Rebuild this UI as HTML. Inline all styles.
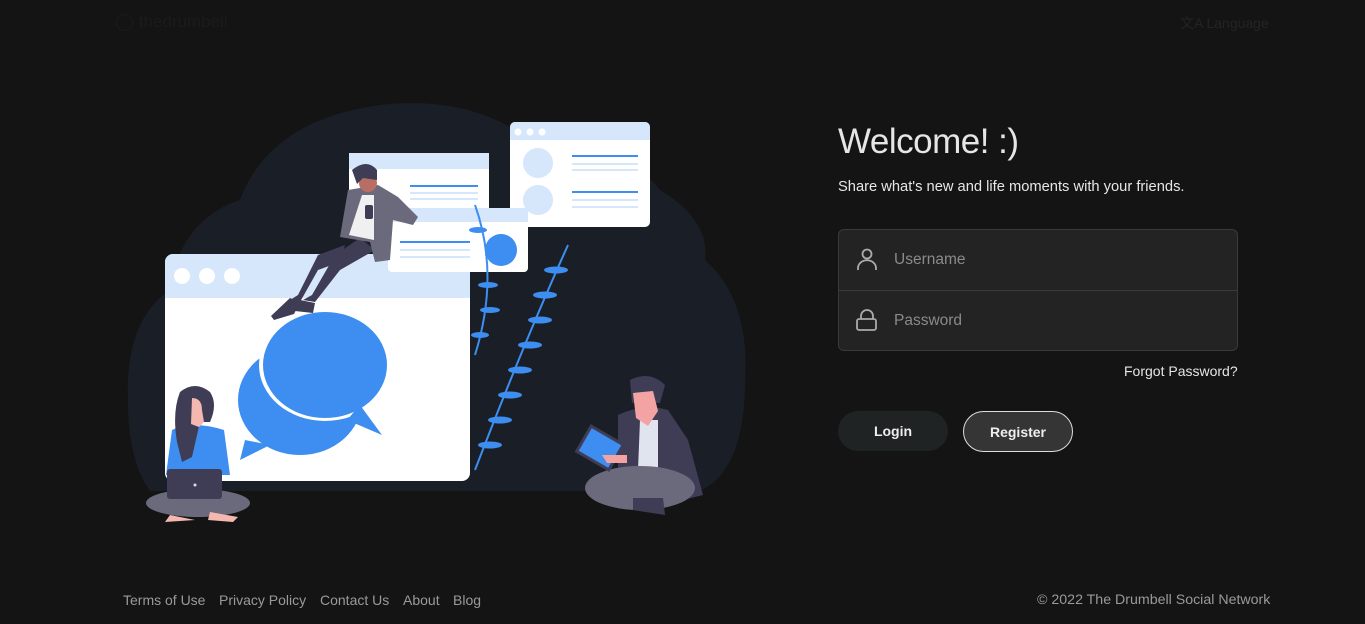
<!DOCTYPE html>
<html><head><style>
body{margin:0;width:1365px;height:624px;background:#141414;font-family:"Liberation Sans",sans-serif;overflow:hidden;position:relative;color:#ddd}
.a{position:absolute}
.box{left:838px;top:229px;width:398px;height:120px;border:1px solid #3a3a3a;border-radius:6px;background:#232323}
.row{height:60px;position:relative}
.row+.row{border-top:1px solid #3a3a3a}
.ph{position:absolute;left:55px;top:21px;font-size:15.5px;color:#8a8a8a}
.btn{height:40px;border-radius:21px;font-size:14px;font-weight:bold;color:#eee;text-align:center;line-height:40px}
.foot{top:592px;font-size:14px;color:#9a9a9a}
</style></head><body>
<div class="a" style="left:115px;top:12px;font-size:17px;color:#1b1b1b">◯ thedrumbell</div>
<div class="a" style="left:1180px;top:13px;font-size:14px;color:#242424">文A Language</div>

<svg class="a" style="left:0;top:0" width="800" height="560">
<path d="M150 491 Q128 460 128 400 Q125 320 170 290 Q180 220 240 200 Q270 120 380 105 Q470 95 530 140 Q620 140 660 190 Q710 220 705 260 Q750 300 745 380 Q745 470 700 491 Z" fill="#1a1f27"/>
<rect x="165" y="254" width="305" height="227" rx="8" fill="#fff"/>
<path d="M173 254h289a8 8 0 0 1 8 8v36H165v-36a8 8 0 0 1 8-8z" fill="#d6e6fb"/>
<circle cx="182" cy="276" r="8" fill="#fff"/><circle cx="207" cy="276" r="8" fill="#fff"/><circle cx="232" cy="276" r="8" fill="#fff"/>
<ellipse cx="300" cy="400" rx="62" ry="55" fill="#3d8ef0"/><path d="M245 440 l-5 20 30 -15z" fill="#3d8ef0"/>
<ellipse cx="325" cy="365" rx="66" ry="56" fill="#fff"/>
<ellipse cx="325" cy="365" rx="62" ry="53" fill="#3d8ef0"/><path d="M360 405 l22 30 -35 -15z" fill="#3d8ef0"/>
<rect x="510" y="122" width="140" height="105" rx="5" fill="#fff"/><path d="M515 122h130a5 5 0 0 1 5 5v13H510v-13a5 5 0 0 1 5-5z" fill="#d6e6fb"/>
<circle cx="518" cy="132" r="3.5" fill="#fff"/><circle cx="530" cy="132" r="3.5" fill="#fff"/><circle cx="542" cy="132" r="3.5" fill="#fff"/>
<circle cx="538" cy="163" r="15" fill="#d6e6fb"/><circle cx="538" cy="200" r="15" fill="#d6e6fb"/>
<g stroke="#3d8ef0" stroke-width="2"><line x1="572" y1="156" x2="638" y2="156"/><line x1="572" y1="192" x2="638" y2="192"/></g>
<g stroke="#d6e6fb" stroke-width="2"><line x1="572" y1="164" x2="638" y2="164"/><line x1="572" y1="170" x2="638" y2="170"/><line x1="572" y1="200" x2="638" y2="200"/><line x1="572" y1="207" x2="638" y2="207"/></g>
<rect x="349" y="153" width="140" height="80" rx="5" fill="#fff"/><rect x="349" y="153" width="140" height="16" fill="#d6e6fb"/>
<g stroke="#3d8ef0" stroke-width="2"><line x1="410" y1="186" x2="478" y2="186"/></g>
<g stroke="#d6e6fb" stroke-width="2"><line x1="410" y1="193" x2="478" y2="193"/><line x1="410" y1="199" x2="478" y2="199"/></g>
<rect x="388" y="208" width="140" height="64" rx="4" fill="#fff"/><rect x="388" y="208" width="140" height="14" fill="#d6e6fb"/>
<circle cx="501" cy="250" r="16" fill="#3d8ef0"/><line x1="400" y1="242" x2="470" y2="242" stroke="#3d8ef0" stroke-width="2"/>
<g stroke="#d6e6fb" stroke-width="2"><line x1="400" y1="250" x2="470" y2="250"/><line x1="400" y1="257" x2="470" y2="257"/></g>
<path d="M475 205 q25 70 0 150" stroke="#3d8ef0" stroke-width="2" fill="none"/>
<path d="M568 245 q-45 100 -93 225" stroke="#3d8ef0" stroke-width="2" fill="none"/>
<g fill="#3d8ef0"><ellipse cx="478" cy="230" rx="9" ry="3"/><ellipse cx="494" cy="255" rx="9" ry="3"/><ellipse cx="488" cy="285" rx="10" ry="3"/><ellipse cx="490" cy="310" rx="10" ry="3"/><ellipse cx="480" cy="335" rx="9" ry="3"/>
<ellipse cx="556" cy="270" rx="12" ry="3.5"/><ellipse cx="545" cy="295" rx="12" ry="3.5"/><ellipse cx="540" cy="320" rx="12" ry="3.5"/><ellipse cx="530" cy="345" rx="12" ry="3.5"/><ellipse cx="520" cy="370" rx="12" ry="3.5"/><ellipse cx="510" cy="395" rx="12" ry="3.5"/><ellipse cx="500" cy="420" rx="12" ry="3.5"/><ellipse cx="490" cy="445" rx="12" ry="3.5"/></g>
<path d="M345 245 L318 255 298 295 290 300 300 302 318 270 340 262 Z" fill="#3f3d56"/>
<path d="M360 238 L335 255 312 295 303 300 315 302 340 270 375 250 Z" fill="#3f3d56"/>
<path d="M290 298 l10 4 -6 12 -20 6 -3 -4 z" fill="#3f3d56"/><path d="M300 300 l15 3 -2 10 -18 -2z" fill="#3f3d56"/>
<path d="M348 190 l30 -5 20 12 20 20 -5 8 -20 -5 -3 40 -15 2 -5 -20 -30 -5 z" fill="#6b6a7d"/>
<path d="M362 195 l12 0 0 45 -25 -5 z" fill="#f0f0f0"/>
<circle cx="368" cy="183" r="9" fill="#b86d65"/>
<path d="M352 170 q15 -12 25 0 l0 10 -14 -2 -6 6 z" fill="#3f3d56"/>
<rect x="365" y="205" width="8" height="14" rx="2" fill="#3f3d56"/>
<path d="M172 430 q20 -10 52 0 l6 45 -64 0 z" fill="#3d8ef0"/>
<ellipse cx="198" cy="503" rx="52" ry="14" fill="#6b6a7d"/>
<path d="M170 515 l25 5 -30 2z M210 512 l28 5 -5 5 -25 -2z" fill="#f4b8b0"/>
<path d="M180 392 q15 -12 30 0 q8 12 0 30 l-10 0 -8 35 -10 5 -5 -20 q-5 -30 3 -50z" fill="#3f3d56"/>
<path d="M192 398 q10 0 10 12 l2 12 -5 5 -8 -3 z" fill="#f4b8b0"/>
<rect x="167" y="469" width="55" height="30" rx="3" fill="#3f3d56"/><circle cx="195" cy="485" r="1.5" fill="#ddd"/>
<path d="M618 415 q25 -12 50 -5 l20 30 15 55 -20 5 -65 -10 z" fill="#3f3d56"/>
<path d="M640 420 l18 0 0 50 -20 0 z" fill="#e0e4ef"/>
<ellipse cx="640" cy="488" rx="55" ry="22" fill="#6b6a7d"/>
<path d="M633 498 l30 0 2 17 -32 -5z" fill="#3f3d56"/>
<path d="M630 380 q20 -10 35 5 l-5 18 -28 0z" fill="#3f3d56"/>
<path d="M633 393 l20 -2 5 20 -10 15 -12 -8 z" fill="#f4a3a3"/>
<g transform="rotate(30 600 448)"><rect x="580" y="432" width="40" height="32" fill="#3f3d56"/><rect x="583" y="435" width="34" height="26" fill="#3d8ef0"/></g>
<path d="M602 455 l25 0 0 8 -20 0 z" fill="#f4a3a3"/>
</svg>

<div class="a" style="left:838px;top:122px;font-size:35px;color:#e6e6e6;letter-spacing:-0.5px">Welcome! :)</div>
<div class="a" style="left:838px;top:179px;font-size:14.7px;color:#e6e6e6">Share what's new and life moments with your friends.</div>
<div class="a box">
 <div class="row"><svg class="a" style="left:17px;top:18px" width="22" height="24" fill="none" stroke="#aaa" stroke-width="1.8"><circle cx="11" cy="6" r="4.5"/><path d="M2 22v-2a7 6 0 0 1 18 0v2"/></svg><span class="ph">Username</span></div>
 <div class="row"><svg class="a" style="left:16px;top:17px" width="24" height="24" fill="none" stroke="#aaa" stroke-width="1.8"><path d="M6 11V8a6 6 0 0 1 12 0v3"/><rect x="2" y="11" width="19" height="11" rx="2"/></svg><span class="ph">Password</span></div>
</div>
<div class="a" style="left:1124px;top:363px;font-size:14px;color:#e6e6e6">Forgot Password?</div>
<div class="a btn" style="left:838px;top:411px;width:110px;background:#1f2323">Login</div>
<div class="a btn" style="left:963px;top:411px;width:108px;height:39px;background:#353535;border:1px solid #ddd">Register</div>

<div class="a foot" style="left:123px">Terms of Use</div>
<div class="a foot" style="left:219px">Privacy Policy</div>
<div class="a foot" style="left:320px">Contact Us</div>
<div class="a foot" style="left:403px">About</div>
<div class="a foot" style="left:453px">Blog</div>
<div class="a foot" style="left:1037px;font-size:14.2px">© 2022 The Drumbell Social Network</div>
</body></html>
